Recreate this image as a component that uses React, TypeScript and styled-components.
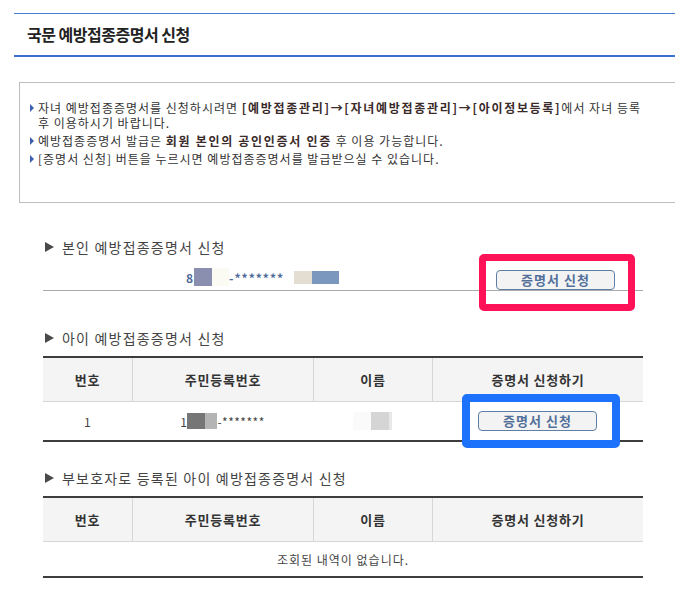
import * as React from 'react';
import styled, { createGlobalStyle } from 'styled-components';

const GlobalStyle = createGlobalStyle`
  body {
    margin: 0;
    background: #fff;
    color: #333;
    font-family: "Noto Sans CJK KR", "Noto Sans", sans-serif;
    overflow-x: hidden;
  }
`

const columns = ['번호', '주민등록번호', '이름', '증명서 신청하기']

const App = () => (
  <Page>
    <GlobalStyle />
    <TitleBar>국문 예방접종증명서 신청</TitleBar>

    <InfoBox>
      <InfoList>
        <InfoItem>
          <Bullet />
          <span>
            자녀 예방접종증명서를 신청하시려면 <Strong>[예방접종관리]→[자녀예방접종관리]→[아이정보등록]</Strong>에서 자녀 등록 후 이용하시기 바랍니다.
          </span>
        </InfoItem>
        <InfoItem>
          <Bullet />
          <span>
            예방접종증명서 발급은 <Strong>회원 본인의 공인인증서 인증</Strong> 후 이용 가능합니다.
          </span>
        </InfoItem>
        <InfoItem>
          <Bullet />
          <span>[증명서 신청] 버튼을 누르시면 예방접종증명서를 발급받으실 수 있습니다.</span>
        </InfoItem>
      </InfoList>
    </InfoBox>

    <Content>
      <SectionHeading $gap={34}>
        <Arrow />본인 예방접종증명서 신청
      </SectionHeading>
      <SelfRow>
        <SelfValue>
          8
          <Mask $w={18} $h={18} $bg="#8a8fb0" />
          <Mask $w={17} $h={18} $bg="#fbfbf3" />
          -*******
          <Mask $w={18} $h={13} $bg="#e4ddd2" style={{ marginLeft: 10 }} />
          <Mask $w={27} $h={13} $bg="#7c97bd" />
        </SelfValue>
        <ApplyButton $right={28}>증명서 신청</ApplyButton>
        <Highlight $color="#ff1257" $width={7} $left={436} $top={-3} $w={156} $h={57} />
      </SelfRow>

      <SectionHeading $gap={37}>
        <Arrow />아이 예방접종증명서 신청
      </SectionHeading>
      <Table>
        {columns.map(c => (
          <HeadCell key={c}>{c}</HeadCell>
        ))}
        <BodyCell $h={38}>1</BodyCell>
        <BodyCell $h={38}>
          1
          <Mask $w={18} $h={16} $bg="#767676" />
          <Mask $w={12} $h={16} $bg="#b4b4b4" />
          -*******
        </BodyCell>
        <BodyCell $h={38}>
          <Mask $w={18} $h={18} $bg="#fafafa" />
          <Mask $w={18} $h={18} $bg="#d5d5d5" />
          <Mask $w={3} $h={18} $bg="#e8e8e8" />
        </BodyCell>
        <BodyCell $h={38}>
          <ApplyButton>증명서 신청</ApplyButton>
        </BodyCell>
        <Highlight $color="#1c72fb" $width={8} $left={419} $top={36} $w={158} $h={54} />
      </Table>

      <SectionHeading $gap={26}>
        <Arrow />부보호자로 등록된 아이 예방접종증명서 신청
      </SectionHeading>
      <Table>
        {columns.map(c => (
          <HeadCell key={c}>{c}</HeadCell>
        ))}
        <EmptyCell>조회된 내역이 없습니다.</EmptyCell>
      </Table>
    </Content>
  </Page>
)

const Page = styled.div`
  padding-top: 13px;
  padding-bottom: 20px;
`

const TitleBar = styled.h1`
  margin: 0 0 0 14px;
  height: 41px;
  padding-left: 13px;
  border-top: 1px solid #4a7bd3;
  border-bottom: 2px solid #3b6fd0;
  font-size: 16px;
  font-weight: 700;
  letter-spacing: -0.5px;
  line-height: 41px;
  color: #222;
`

const InfoBox = styled.div`
  box-sizing: border-box;
  height: 121px;
  margin: 25px -2px 0 19px;
  padding: 17px 20px 0 10px;
  border: 1px solid #bdbdbd;
`

const InfoList = styled.ul`
  margin: 0;
  padding: 0;
  list-style: none;
`

const InfoItem = styled.li`
  display: flex;
  max-width: 622px;
  font-size: 12px;
  letter-spacing: 1px;
  line-height: 15px;
  word-break: keep-all;
  color: #333;
  & + & {
    margin-top: 3px;
  }
`

const Bullet = styled.span`
  flex: none;
  width: 0;
  height: 0;
  margin: 4px 4px 0 0;
  border-left: 4px solid #3d5fae;
  border-top: 4px solid transparent;
  border-bottom: 4px solid transparent;
`

const Strong = styled.b`
  font-weight: 700;
  letter-spacing: 1.7px;
  color: #3a2a2a;
`

const Content = styled.div`
  width: 600px;
  margin-left: 43px;
`

const SectionHeading = styled.h2<{ $gap: number }>`
  display: flex;
  align-items: center;
  height: 20px;
  margin: ${p => p.$gap}px 0 0 2px;
  font-size: 14px;
  font-weight: 400;
  letter-spacing: 1.2px;
  line-height: 20px;
  color: #444;
`

const Arrow = styled.span`
  width: 0;
  height: 0;
  margin-right: 8px;
  border-left: 9px solid #4a4a4a;
  border-top: 5px solid transparent;
  border-bottom: 5px solid transparent;
`

const SelfRow = styled.div`
  position: relative;
  display: flex;
  align-items: flex-end;
  height: 33px;
  border-bottom: 1px solid #aaa;
`

const SelfValue = styled.div`
  display: flex;
  align-items: center;
  margin: 0 0 4px 143px;
  font-size: 12px;
  font-weight: 700;
  letter-spacing: 1px;
  color: #4d6b99;
`

const Mask = styled.span<{ $w: number; $h: number; $bg: string }>`
  display: inline-block;
  width: ${p => p.$w}px;
  height: ${p => p.$h}px;
  background: ${p => p.$bg};
`

const ApplyButton = styled.button<{ $right?: number }>`
  box-sizing: border-box;
  width: 119px;
  height: 20px;
  margin: 0 ${p => p.$right || 0}px 0 ${p => (p.$right ? 'auto' : '0')};
  padding: 0;
  border: 1px solid #5d7fa5;
  border-radius: 4px;
  background: #f3f3f3;
  font-family: inherit;
  font-size: 13px;
  font-weight: 700;
  letter-spacing: 1px;
  line-height: 18px;
  color: #52709a;
  cursor: pointer;
`

const Highlight = styled.div<{ $color: string; $width: number; $left: number; $top: number; $w: number; $h: number }>`
  position: absolute;
  left: ${p => p.$left}px;
  top: ${p => p.$top}px;
  box-sizing: border-box;
  width: ${p => p.$w}px;
  height: ${p => p.$h}px;
  border: ${p => p.$width}px solid ${p => p.$color};
  border-radius: 5px;
  pointer-events: none;
`

const Table = styled.div`
  position: relative;
  display: grid;
  grid-template-columns: 89px 181px 119px 211px;
  margin-top: 8px;
  border-top: 2px solid #3d3d3d;
  border-bottom: 2px solid #3d3d3d;
`

const HeadCell = styled.div`
  display: flex;
  align-items: center;
  justify-content: center;
  height: 43px;
  background: #f4f4f4;
  border-bottom: 1px solid #d6d6d6;
  font-size: 13px;
  font-weight: 700;
  letter-spacing: 0.8px;
  color: #333;
  & + & {
    border-left: 1px solid #d6d6d6;
  }
`

const BodyCell = styled.div<{ $h: number }>`
  display: flex;
  align-items: center;
  justify-content: center;
  height: ${p => p.$h}px;
  font-size: 12px;
  letter-spacing: 0.5px;
  color: #444;
`

const EmptyCell = styled.div`
  grid-column: 1 / -1;
  display: flex;
  align-items: center;
  justify-content: center;
  height: 34px;
  font-size: 12px;
  letter-spacing: 1px;
  color: #444;
`

export default App;
